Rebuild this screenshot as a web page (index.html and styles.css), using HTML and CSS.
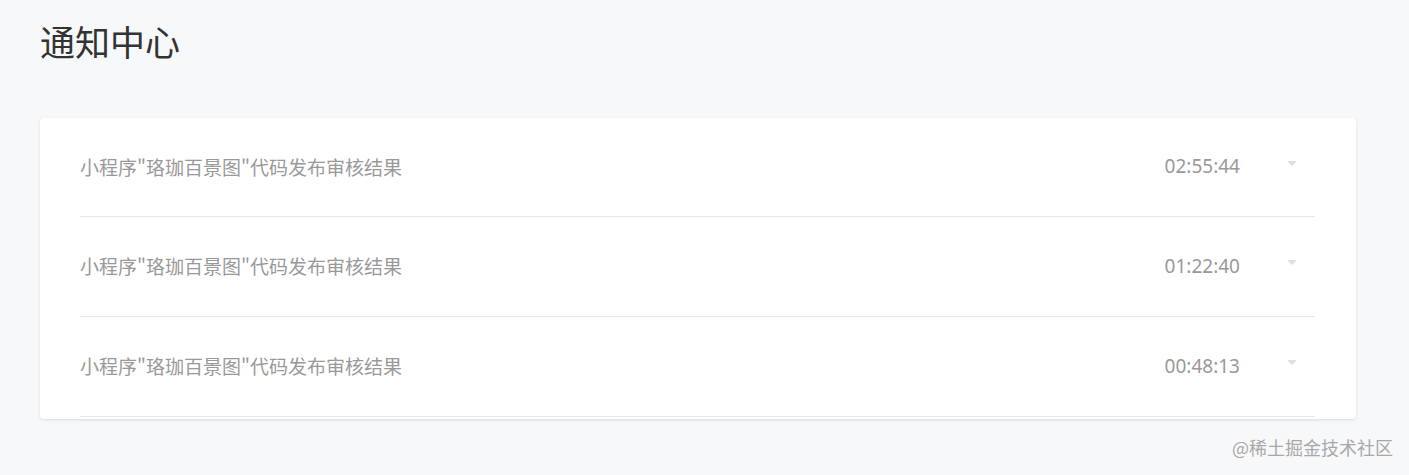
FILE: index.html
```html
<!DOCTYPE html>
<html lang="zh">
<head>
<meta charset="utf-8">
<title>通知中心</title>
<link rel="stylesheet" href="styles.css">
</head>
<body>
<div class="page">
  <h1 class="title">通知中心</h1>
  <div class="card">
    <div class="item">
      <span class="item-text">小程序"珞珈百景图"代码发布审核结果</span>
      <span class="item-time">02:55:44</span>
      <span class="caret"></span>
    </div>
    <div class="item">
      <span class="item-text">小程序"珞珈百景图"代码发布审核结果</span>
      <span class="item-time">01:22:40</span>
      <span class="caret"></span>
    </div>
    <div class="item">
      <span class="item-text">小程序"珞珈百景图"代码发布审核结果</span>
      <span class="item-time">00:48:13</span>
      <span class="caret"></span>
    </div>
  </div>
</div>
<div class="watermark">@稀土掘金技术社区</div>
</body>
</html>
```

FILE: styles.css
```css
html, body {
  margin: 0;
  padding: 0;
}
body {
  background: #f7f8fa;
  font-family: "Noto Sans CJK SC", "Noto Sans", sans-serif;
  width: 1409px;
  height: 475px;
  overflow: hidden;
  position: relative;
}
.page {
  padding: 0 53px 0 40px;
}
.title {
  margin: 0;
  padding-top: 18px;
  height: 100px;
  box-sizing: border-box;
  font-size: 35px;
  font-weight: 400;
  line-height: 46px;
  color: #333;
}
.card {
  margin-top: 18px;
  background: #fff;
  border-radius: 4px;
  box-shadow: 0 1px 3px rgba(0, 0, 0, 0.12);
  padding: 0 41px 2px 40px;
}
.item {
  display: flex;
  align-items: center;
  height: 100px;
  padding-bottom: 2px;
  box-sizing: border-box;
  border-bottom: 1px solid #e8e8e8;
}
.item:first-child {
  height: 99px;
}
.item-text {
  flex: 1;
  font-size: 19px;
  color: #999;
}
.item-time {
  font-size: 19px;
  color: #999;
  font-family: "Noto Sans", "Noto Sans CJK SC", sans-serif;
}
.caret {
  width: 0;
  height: 0;
  border-left: 5px solid transparent;
  border-right: 5px solid transparent;
  border-top: 5px solid #e0e0e0;
  margin: 0 18px 6px 47px;
}
.watermark {
  position: absolute;
  right: 16px;
  top: 434px;
  font-size: 18px;
  color: #a8a8a8;
  font-family: "Noto Sans CJK SC", sans-serif;
}
```
